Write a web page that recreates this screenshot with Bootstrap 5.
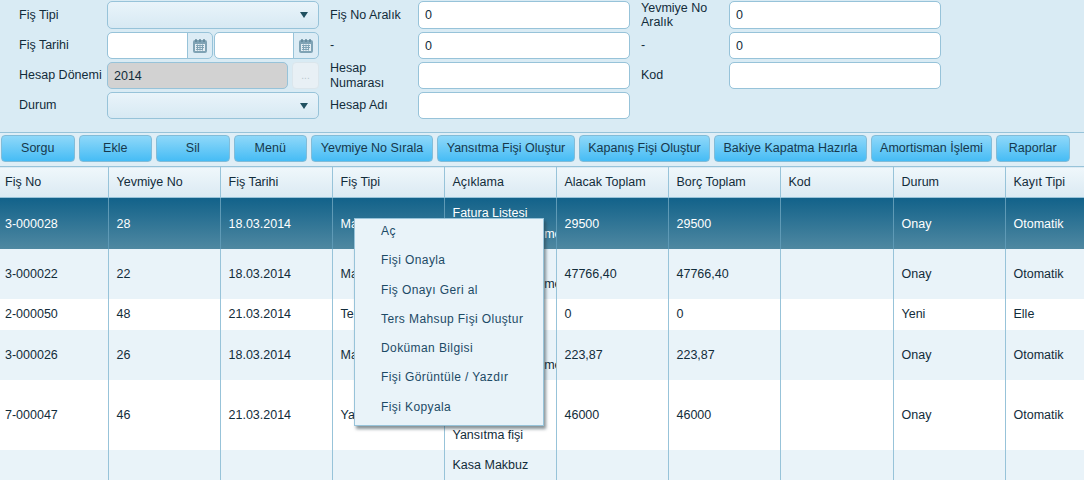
<!DOCTYPE html>
<html lang="tr">
<head>
    <meta charset="UTF-8">
    <title>Fiş Listesi</title>
    <link href="https://cdn.jsdelivr.net/npm/bootstrap@5.3.0/dist/css/bootstrap.min.css" rel="stylesheet">
    <style>
        html, body { height: 480px; overflow: hidden; }
        body {
            position: relative;
            background: #fff;
            color: #122c3a;
            font-family: "Liberation Sans", Arial, sans-serif;
            font-size: 12.5px;
        }
        .filter-panel {
            height: 133px;
            background: #d9ebf4;
            border-bottom: 1px solid #97c3d9;
            padding: 1px 0 0 19px;
            display: grid;
            grid-template-columns: 88px 212px 88px 212px 88px 212px;
            grid-template-rows: 28px 27px 27px 27px;
            row-gap: 3px;
        }
        .field-label { line-height: 14.5px; align-self: center; }
        .label-wide { margin-left: 11px; margin-right: -11px; }
        .filter-panel .form-control, .filter-panel .form-select {
            height: 100%;
            min-height: 0;
            font-size: 12.5px;
            color: #122c3a;
            padding: 0 6px;
            border: 1px solid #97c3d9;
            border-radius: 5px;
            box-shadow: none;
        }
        .ctl-wide { margin-left: 11px; margin-right: -11px; }
        .ctl-third { margin-left: 22px; margin-right: -22px; }
        .filter-panel .form-select {
            background: url("data:image/svg+xml,%3Csvg xmlns='http://www.w3.org/2000/svg' width='10' height='8'%3E%3Cpath d='M1 1h8L5 7z' fill='%2320505f'/%3E%3C/svg%3E") no-repeat right 9px center, linear-gradient(#e9f4fa, #d7e9f3);
        }
        .date-pair { display: flex; gap: 1px; }
        .date-pair .input-group { flex: 1 1 0; flex-wrap: nowrap; }
        .date-pair .form-control { min-width: 0; }
        .date-pair .input-group-text {
            width: 26px;
            padding: 0;
            justify-content: center;
            background: #dcecf5;
            border: 1px solid #97c3d9;
            border-radius: 0 5px 5px 0;
        }
        .period-row { display: flex; justify-content: space-between; }
        .period-row .form-control { width: 181px; flex: none; }
        .filter-panel .form-control.period-input { background: #d2d2d2; opacity: 1; }
        .lookup-btn {
            width: 27px;
            height: 27px;
            padding: 0;
            font-size: 10px;
            line-height: 24px;
            color: #b9c6cd;
            background: #e8f0f5;
            border: 1px solid #dbe6ec;
            border-radius: 4px;
        }
        .action-bar {
            height: 33px;
            background: #dfeef6;
            padding: 2px 0 0 1px;
            display: flex;
            gap: 4px;
        }
        .action-btn {
            height: 27px;
            min-width: 73.5px;
            padding: 0 8px;
            font-size: 12.5px;
            line-height: 25px;
            color: #16384c;
            background: linear-gradient(#8fd8f9, #46bcf5);
            border: 1px solid #82bcd8;
            border-radius: 4px;
        }
        .btn-yevmiye { min-width: 122px; }
        .btn-yansitma { min-width: 138px; }
        .btn-kapanis { min-width: 131px; }
        .btn-bakiye { min-width: 153px; }
        .btn-amort { min-width: 121px; }
        .table.grid-tbl {
            table-layout: fixed;
            width: 1084px;
            margin: 0;
            border-collapse: collapse;
            color: #122c3a;
            font-size: 12.5px;
            line-height: 20.5px;
        }
        .table.grid-tbl th, .table.grid-tbl td {
            padding: 0 0 0 8px;
            border: 0;
            border-left: 1px solid #97c3d9;
            vertical-align: middle;
            white-space: nowrap;
            overflow: hidden;
            font-weight: 400;
            background: transparent;
            box-shadow: none;
            color: inherit;
        }
        .table.grid-tbl td { padding-top: 1px; }
        .table.grid-tbl th:first-child, .table.grid-tbl td:first-child { border-left: 0; padding-left: 5px; }
        .table.grid-tbl thead tr {
            height: 31px;
            background: linear-gradient(#eff7fb, #dbeaf3);
            border-top: 1px solid #97c3d9;
            border-bottom: 1px solid #97c3d9;
        }
        .row-sel { background: linear-gradient(#12628a, #4f88a1); }
        .table.grid-tbl .row-sel { color: #fff; }
        .table.grid-tbl .row-sel td { border-left-color: #5f9ab6; }
        .row-alt { background: #e9f3f9; }
        .row-plain { background: #fff; }
        .row-h51 { height: 51px; }
        .row-h50 { height: 50px; }
        .row-h31 { height: 31px; }
        .row-h70 { height: 70px; }
        .table.grid-tbl td.cell-top { vertical-align: top; padding-top: 5px; }
        .ctx-menu.dropdown-menu {
            left: 354px;
            top: 218px;
            width: 190px;
            height: 208px;
            padding: 0;
            background: #e9f3f9;
            border: 1px solid #97c3d9;
            border-radius: 0;
            box-shadow: 2px 3px 3px rgba(40, 60, 70, .55);
        }
        .ctx-menu .dropdown-item {
            height: 29.3px;
            padding: 0 0 0 26px;
            font-size: 12px;
            letter-spacing: .4px;
            line-height: 25px;
            color: #1c4a66;
        }
    </style>
</head>
<body>

<div class="filter-panel">
    <span class="field-label">Fiş Tipi</span>
    <select class="form-select"></select>
    <span class="field-label label-wide">Fiş No Aralık</span>
    <input class="form-control ctl-wide" value="0">
    <span class="field-label ctl-third">Yevmiye No Aralık</span>
    <input class="form-control ctl-third" value="0">

    <span class="field-label">Fiş Tarihi</span>
    <div class="date-pair">
        <div class="input-group">
            <input class="form-control">
            <span class="input-group-text"><svg width="16" height="16" viewBox="0 0 16 16"><rect x="1" y="2" width="14" height="13" rx="2" fill="#7fa3b5"/><rect x="3" y="6" width="10" height="7" fill="#e4eef3"/><path d="M4 1v3M8 1v3M12 1v3" stroke="#5d8396" stroke-width="1.4"/><path d="M4 7.5h8M4 9.5h8M4 11.5h6M5.5 6.5v6M8 6.5v6M10.5 6.5v6" stroke="#7fa3b5" stroke-width="1"/></svg></span>
        </div>
        <div class="input-group">
            <input class="form-control">
            <span class="input-group-text"><svg width="16" height="16" viewBox="0 0 16 16"><rect x="1" y="2" width="14" height="13" rx="2" fill="#7fa3b5"/><rect x="3" y="6" width="10" height="7" fill="#e4eef3"/><path d="M4 1v3M8 1v3M12 1v3" stroke="#5d8396" stroke-width="1.4"/><path d="M4 7.5h8M4 9.5h8M4 11.5h6M5.5 6.5v6M8 6.5v6M10.5 6.5v6" stroke="#7fa3b5" stroke-width="1"/></svg></span>
        </div>
    </div>
    <span class="field-label label-wide">-</span>
    <input class="form-control ctl-wide" value="0">
    <span class="field-label ctl-third">-</span>
    <input class="form-control ctl-third" value="0">

    <span class="field-label">Hesap Dönemi</span>
    <div class="period-row">
        <input class="form-control period-input" value="2014" disabled>
        <button class="lookup-btn" type="button" disabled>...</button>
    </div>
    <span class="field-label label-wide">Hesap Numarası</span>
    <input class="form-control ctl-wide">
    <span class="field-label ctl-third">Kod</span>
    <input class="form-control ctl-third">

    <span class="field-label">Durum</span>
    <select class="form-select"></select>
    <span class="field-label label-wide">Hesap Adı</span>
    <input class="form-control ctl-wide">
</div>

<div class="action-bar">
    <button class="action-btn" type="button">Sorgu</button>
    <button class="action-btn" type="button">Ekle</button>
    <button class="action-btn" type="button">Sil</button>
    <button class="action-btn" type="button">Menü</button>
    <button class="action-btn btn-yevmiye" type="button">Yevmiye No Sırala</button>
    <button class="action-btn btn-yansitma" type="button">Yansıtma Fişi Oluştur</button>
    <button class="action-btn btn-kapanis" type="button">Kapanış Fişi Oluştur</button>
    <button class="action-btn btn-bakiye" type="button">Bakiye Kapatma Hazırla</button>
    <button class="action-btn btn-amort" type="button">Amortisman İşlemi</button>
    <button class="action-btn" type="button">Raporlar</button>
</div>

<table class="table grid-tbl">
    <colgroup>
        <col style="width:108px"><col style="width:112px"><col style="width:112px"><col style="width:112px"><col style="width:112px">
        <col style="width:112px"><col style="width:112px"><col style="width:113px"><col style="width:112px"><col style="width:79px">
    </colgroup>
    <thead>
        <tr><th>Fiş No</th><th>Yevmiye No</th><th>Fiş Tarihi</th><th>Fiş Tipi</th><th>Açıklama</th><th>Alacak Toplam</th><th>Borç Toplam</th><th>Kod</th><th>Durum</th><th>Kayıt Tipi</th></tr>
    </thead>
    <tbody>
        <tr class="row-sel row-h51"><td>3-000028</td><td>28</td><td>18.03.2014</td><td>Mahsup</td><td>Fatura Listesi<br>Su Faturası Ödeme</td><td>29500</td><td>29500</td><td></td><td>Onay</td><td>Otomatik</td></tr>
        <tr class="row-alt row-h50"><td>3-000022</td><td>22</td><td>18.03.2014</td><td>Mahsup</td><td>Fatura Listesi<br>Su Faturası Ödeme</td><td>47766,40</td><td>47766,40</td><td></td><td>Onay</td><td>Otomatik</td></tr>
        <tr class="row-plain row-h31"><td>2-000050</td><td>48</td><td>21.03.2014</td><td>Ters Mahsup</td><td>Ters kayıt</td><td>0</td><td>0</td><td></td><td>Yeni</td><td>Elle</td></tr>
        <tr class="row-alt row-h50"><td>3-000026</td><td>26</td><td>18.03.2014</td><td>Mahsup</td><td>Fatura Listesi<br>Su Faturası Ödeme</td><td>223,87</td><td>223,87</td><td></td><td>Onay</td><td>Otomatik</td></tr>
        <tr class="row-plain row-h70"><td>7-000047</td><td>46</td><td>21.03.2014</td><td>Yansıtma</td><td>Kur farkı<br>Gider kaydı<br>Yansıtma fişi</td><td>46000</td><td>46000</td><td></td><td>Onay</td><td>Otomatik</td></tr>
        <tr class="row-alt row-h50"><td></td><td></td><td></td><td></td><td class="cell-top">Kasa Makbuz</td><td></td><td></td><td></td><td></td><td></td></tr>
    </tbody>
</table>

<ul class="dropdown-menu show ctx-menu">
    <li><a class="dropdown-item" href="#">Aç</a></li>
    <li><a class="dropdown-item" href="#">Fişi Onayla</a></li>
    <li><a class="dropdown-item" href="#">Fiş Onayı Geri al</a></li>
    <li><a class="dropdown-item" href="#">Ters Mahsup Fişi Oluştur</a></li>
    <li><a class="dropdown-item" href="#">Doküman Bilgisi</a></li>
    <li><a class="dropdown-item" href="#">Fişi Görüntüle / Yazdır</a></li>
    <li><a class="dropdown-item" href="#">Fişi Kopyala</a></li>
</ul>

<script src="https://cdn.jsdelivr.net/npm/bootstrap@5.3.0/dist/js/bootstrap.bundle.min.js"></script>
</body>
</html>
